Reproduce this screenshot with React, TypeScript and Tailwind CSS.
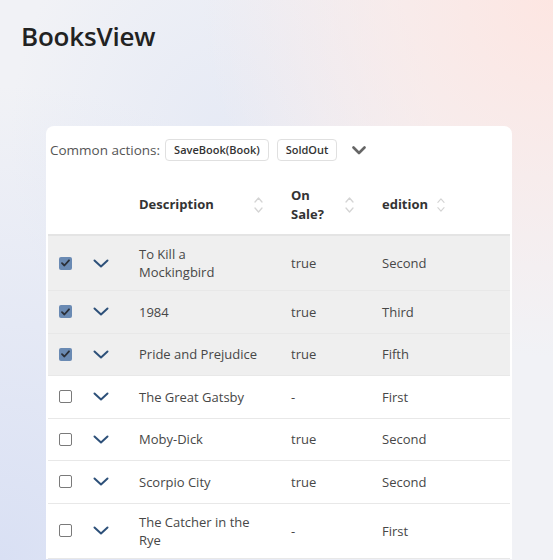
import React from "react"

type Book = {
  description: string
  onSale: string
  edition: string
  selected: boolean
}

const books: Book[] = [
  { description: "To Kill a Mockingbird", onSale: "true", edition: "Second", selected: true },
  { description: "1984", onSale: "true", edition: "Third", selected: true },
  { description: "Pride and Prejudice", onSale: "true", edition: "Fifth", selected: true },
  { description: "The Great Gatsby", onSale: "-", edition: "First", selected: false },
  { description: "Moby-Dick", onSale: "true", edition: "Second", selected: false },
  { description: "Scorpio City", onSale: "true", edition: "Second", selected: false },
  { description: "The Catcher in the Rye", onSale: "-", edition: "First", selected: false },
]

function SortIcon() {
  return (
    <svg width="9" height="20" viewBox="0 0 9 20" fill="none" stroke="#d4d4d4" strokeWidth="1.3" strokeLinecap="round" strokeLinejoin="round">
      <path d="M1 7 L4.5 3 L8 7" />
      <path d="M1 13 L4.5 17 L8 13" />
    </svg>
  )
}

function RowChevron() {
  return (
    <svg width="16" height="9" viewBox="0 0 16 9" fill="none" stroke="#2d5079" strokeWidth="2" strokeLinecap="round" strokeLinejoin="round">
      <path d="M1.5 1.5 L8 7.5 L14.5 1.5" />
    </svg>
  )
}

function Checkbox({ checked }: { checked: boolean }) {
  if (checked) {
    return (
      <div className="flex h-[13px] w-[13px] items-center justify-center rounded-[2px] bg-[#6a8ab3]">
        <svg width="9" height="8" viewBox="0 0 9 8" fill="none" stroke="#2a2f38" strokeWidth="1.8" strokeLinecap="round" strokeLinejoin="round">
          <path d="M1 4.2 L3.4 6.5 L8 1.3" />
        </svg>
      </div>
    )
  }
  return <div className="h-[13px] w-[13px] rounded-[2px] border border-[#7a7a7a] bg-white" />
}

export default function App() {
  return (
    <div
      className="min-h-[560px] overflow-hidden bg-[#f1f2f6] bg-[radial-gradient(ellipse_at_100%_0%,#fde6e2_0%,rgba(253,230,226,0)_45%),radial-gradient(ellipse_at_0%_100%,#d9e0f4_0%,rgba(217,224,244,0)_60%),radial-gradient(ellipse_at_40%_25%,#e6eaf5_0%,rgba(230,234,245,0)_45%)] pl-[21px] pt-[20px] text-[#474747]"
      style={{ fontFamily: '"Open Sans", "Liberation Sans", sans-serif' }}
    >
      <h1 className="text-[26px] font-semibold leading-[32px] text-[#222] tracking-[-0.2px]">BooksView</h1>

      <div className="ml-[25px] mt-[74px] w-[466px] rounded-t-[8px] bg-white px-[2px] pt-[13px]">
        <div className="flex items-center pl-[2px]">
          <span className="text-[13.5px] text-[#555]">Common actions:</span>
          <button className="ml-[5px] h-[22px] rounded-[4px] border border-[#e0e0e0] bg-white px-[8px] text-[11px] font-semibold text-[#333]">
            SaveBook(Book)
          </button>
          <button className="ml-[8px] h-[22px] rounded-[4px] border border-[#e0e0e0] bg-white px-[8px] text-[11px] font-semibold text-[#333]">
            SoldOut
          </button>
          <svg className="ml-[15px]" width="14" height="9" viewBox="0 0 14 9" fill="none" stroke="#666" strokeWidth="2.6" strokeLinecap="round" strokeLinejoin="round">
            <path d="M1.5 1.5 L7 7 L12.5 1.5" />
          </svg>
        </div>

        <table className="mt-[19px] w-full table-fixed border-collapse text-[13px]">
          <colgroup>
            <col className="w-[32px]" />
            <col className="w-[45px]" />
            <col className="w-[152px]" />
            <col className="w-[91px]" />
            <col className="w-[91px]" />
            <col />
          </colgroup>
          <thead>
            <tr className="h-[55px] border-b-2 border-[#e4e4e4] text-left font-semibold text-[#333]">
              <th />
              <th />
              <th className="px-[14px] pb-[4px]">
                <div className="flex items-center justify-between">
                  <span>Description</span>
                  <SortIcon />
                </div>
              </th>
              <th className="px-[14px] pb-[4px]">
                <div className="flex items-center justify-between leading-[19px]">
                  <span>
                    On
                    <br />
                    Sale?
                  </span>
                  <SortIcon />
                </div>
              </th>
              <th className="px-[14px] pb-[4px]">
                <div className="flex items-center gap-[9px]">
                  <span>edition</span>
                  <SortIcon />
                </div>
              </th>
              <th />
            </tr>
          </thead>
          <tbody>
            {books.map((b) => (
              <tr key={b.description} className={`h-[42.5px] border-b border-[#e8e8e8] ${b.selected ? "bg-[#efefef]" : "bg-white"}`}>
                <td className="pl-[11px] align-middle">
                  <Checkbox checked={b.selected} />
                </td>
                <td className="pl-[13px] align-middle">
                  <RowChevron />
                </td>
                <td className="px-[14px] py-[9px] leading-[18px]">{b.description}</td>
                <td className="px-[14px] leading-[18px]">{b.onSale}</td>
                <td className="px-[14px] leading-[18px]">{b.edition}</td>
                <td />
              </tr>
            ))}
          </tbody>
        </table>
      </div>
    </div>
  )
}
